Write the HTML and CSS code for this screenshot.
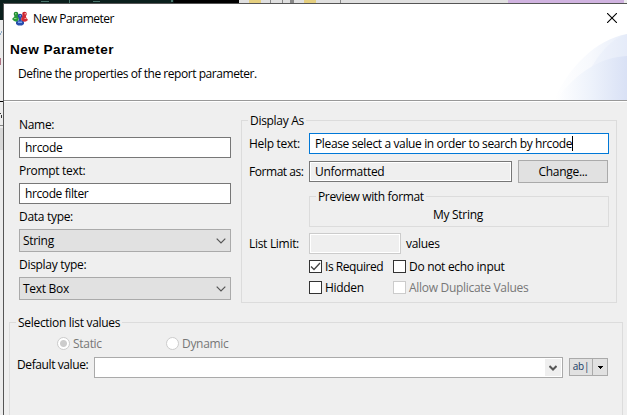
FILE: index.html
```html
<!DOCTYPE html>
<html lang="en">
<head>
<meta charset="utf-8">
<title>New Parameter</title>
<link rel="stylesheet" href="styles.css">
</head>
<body>
<svg class="backdrop" width="627" height="415" shape-rendering="crispEdges">
  <path fill="#ececec" d="M0 0h627v415H0z"/>
  <path fill="#071513" d="M0 0h239v3H0z"/><path fill="#0a1f1c" d="M0 0h172v3H0zM0 3h3v17H0z"/>
  <path fill="#48736a" d="M41 1h8v1h-8zM69 0h1v3h-1zM93 1h7v1h-7zM171 0h2v2h-2z"/>
  <path fill="#000" d="M174 0h65v3h-65zM0 101h3v1H0z"/>
  <path fill="#e0e0e0" d="M239 0h269v3H239z"/><path fill="#e5cf7f" d="M249 0h12v3h-12zM304 0h12v3h-12z"/>
  <path fill="#888" d="M270 0h1v3h-1zM282 0h1v3h-1zM290 0h4v3h-4zM340 0h1v3h-1zM0 125h3v1H0z"/>
  <path fill="#d0b3e0" d="M508 0h116v3H508z"/>
  <path fill="#d8d8d8" d="M0 128h3v22H0z"/><path fill="#8eacc8" d="M1 31h1v2H1zM0 33h1v2H0z"/>
  <path fill="#ae7182" d="M0 58h1v7H0z"/><path fill="#333" d="M0 113h1v1H0zM1 115h1v3H1z"/>
</svg>
<main class="dialog">
  <header class="header">
    <svg class="wave" width="75" height="67" viewBox="0 0 75 67">
      <defs>
        <linearGradient id="g1"><stop offset="0" stop-color="#fff"/><stop offset=".5" stop-color="#f7f9fd"/><stop offset="1" stop-color="#e7edf9"/></linearGradient>
        <linearGradient id="g2"><stop offset="0" stop-color="#fff"/><stop offset=".5" stop-color="#edf2fb"/><stop offset="1" stop-color="#d9e1f5"/></linearGradient>
      </defs>
      <path fill="url(#g1)" d="M2 67C17 34 43 7 75 1V67z"/>
      <path fill="#e2e9f8" opacity=".3" d="M37 39C47 20 59 6 75 1V24C60 25 47 31 37 39z"/>
      <path fill="url(#g2)" d="M4 67C22 42 47 24 75 23V67z"/>
    </svg>
    <div class="titlebar">
      <svg class="app-icon" width="16" height="15" viewBox="0 0 16 15">
        <circle cx="4" cy="3" r="2.300" fill="#1f8a32"/><path fill="#2b9a3c" d="M3 4h3l1 4-2 3-3-1-2-2 2-2z"/><path fill="#8cd884" d="M3 2h1.500v1.500H3zM2 7h2.500v1H2z"/>
        <circle cx="12.500" cy="3" r="2.300" fill="#c71f2c"/><path fill="#d02c37" d="M10.500 4h3.500l0 2 2 3-2 1.500-4 .5L9 8z"/><path fill="#f5a09c" d="M12.500 2H14v1.500h-1.500zM12.500 7h2v1h-2z"/>
        <circle cx="8" cy="5" r="2.300" fill="#2346a5"/><path fill="#294fae" d="M7 6h2v3l3 2v2l-2 1.500H6L4 13v-2l3-2z"/><path fill="#7aa7eb" d="M7.500 4H9v1.500H7.500zM6 10.500h4v1.500H6z"/>
      </svg>
      <span class="title">New Parameter</span>
      <svg class="close" width="10" height="10" viewBox="0 0 10 10"><path d="M0 0l10 10M10 0L0 10" stroke="#000" stroke-width="1.1"/></svg>
    </div>
    <h1>New Parameter</h1>
    <p>Define the properties of the report parameter.</p>
  </header>
  <div class="columns">
    <section class="left">
      <div class="label">Name:</div><div class="input">hrcode</div>
      <div class="label">Prompt text:</div><div class="input prompt">hrcode filter</div>
      <div class="label">Data type:</div>
      <div class="select"><span>String</span><svg width="10" height="6"><path d="M.7 .7L5 5 9.3 .7" fill="none" stroke="#555" stroke-width="1.2"/></svg></div>
      <div class="label">Display type:</div>
      <div class="select"><span>Text Box</span><svg width="10" height="6"><path d="M.7 .7L5 5 9.3 .7" fill="none" stroke="#555" stroke-width="1.2"/></svg></div>
    </section>
    <section class="group display">
      <div class="legend">Display As</div>
      <div class="row help"><span class="name">Help text:</span><div class="input focused"><span class="help-value">Please select a value in order to search by hrcode</span><i class="caret"></i></div></div>
      <div class="row format"><span class="name tight">Format as:</span><div class="input readonly">Unformatted</div><div class="button">Change...</div></div>
      <div class="group preview"><div class="legend">Preview with format</div><div class="sample">My String</div></div>
      <div class="row limit"><span class="name">List Limit:</span><div class="input disabled"></div><span class="values">values</span></div>
      <div class="checks">
        <div class="check tight"><i class="box"><svg width="11" height="11"><path d="M1 5.5L4 8.5 10 2" fill="none" stroke="#444" stroke-width="1.3"/></svg></i><span>Is Required</span></div>
        <div class="check"><i class="box"></i><span>Do not echo input</span></div>
        <div class="check"><i class="box"></i><span>Hidden</span></div>
        <div class="check off"><i class="box"></i><span>Allow Duplicate Values</span></div>
      </div>
    </section>
  </div>
  <section class="group selection">
    <div class="legend">Selection list values</div>
    <div class="radios"><div class="radio"><i class="dot on"></i>Static</div><div class="radio"><i class="dot"></i>Dynamic</div></div>
    <div class="default">
      <span class="default-name">Default value:</span>
      <div class="combo"><span class="drop"><svg width="8" height="6"><path d="M.5 1L4 4.5 7.5 1" fill="none" stroke="#555" stroke-width="2"/></svg></span></div>
      <div class="split"><span class="ab">ab|</span><span class="more"><svg width="5" height="3" shape-rendering="crispEdges"><path d="M0 0h5v1H4v1H3v1H2V2H1V1H0z"/></svg></span></div>
    </div>
  </section>
</main>
</body>
</html>
```
FILE: styles.css
```css
* { box-sizing: border-box; }
body { margin: 0; width: 627px; height: 415px; overflow: hidden; font: 12px/16px "Open Sans", "Noto Sans", sans-serif; letter-spacing: -0.3px; color: #000; white-space: nowrap; }
svg { display: block; flex: none; }
.backdrop { position: absolute; z-index: -1; left: 0; top: 0; }
.dialog { margin: 3px 0 0 3px; height: 412px; border: solid #555; border-width: 1px 0 0 1px; background: #efefef; overflow: hidden; }
.header { position: relative; height: 97px; background: #fff; border-bottom: 1px solid #999; }
.wave { position: absolute; right: 0; bottom: 0; }
.titlebar { display: flex; align-items: center; height: 30px; padding: 0 10px 0 8px; }
.app-icon { margin-top: -2px; }
.title { margin-left: 5px; letter-spacing: -0.5px; }
.close { margin: -2px 0 0 auto; }
h1 { margin: 8px 0 0 6px; font: bold 13.6px/16px "Liberation Sans", sans-serif; letter-spacing: 0.45px; }
p { margin: 8px 0 0 14px; letter-spacing: -0.45px; }
.columns { display: flex; gap: 10px; height: 222px; border-top: 1px solid #fff; padding-left: 15px; }
.left { width: 212px; padding-top: 15px; }
.label { height: 16px; margin-bottom: 4px; }
.input { height: 21px; margin-bottom: 5px; border: 1px solid #777; background: #fff; padding: 2px 5px; }
.prompt { letter-spacing: -0.4px; }
.select { display: flex; align-items: center; justify-content: space-between; height: 23px; margin-bottom: 5px; padding: 0 4px 0 3px; border: 1px solid #aaa; background: #e1e1e1; }
.group { border: 1px solid #dcdcdc; }
.legend { width: max-content; height: 16px; margin: -8px 0 0 6px; padding: 0 2px; background: #efefef; }
.display { width: 376px; height: 183px; margin-top: 18px; }
.row { display: flex; align-items: center; padding-left: 7px; }
.row .input { margin: 0; }
.name { width: 60px; }
.tight { letter-spacing: -0.45px; }
.help { margin-top: 4px; }
.focused { display: flex; width: 300px; border-color: #0078d7; }
.help-value { letter-spacing: -0.37px; }
.caret { width: 1px; height: 15px; background: #000; }
.format { margin-top: 6px; }
.readonly { width: 203px; background: #efefef; box-shadow: inset 0 0 0 1px #fff; }
.button { width: 90px; height: 23px; margin-left: 6px; border: 1px solid #aaa; background: #e1e1e1; text-align: center; line-height: 21px; }
.preview { width: 300px; height: 31px; margin: 13px 0 0 67px; }
.preview > .legend { letter-spacing: -0.35px; }
.sample { margin-top: 2px; padding-right: 2px; text-align: center; }
.limit { margin-top: 6px; }
.disabled { width: 92px; border-color: #ccc; background: #efefef; box-shadow: inset 0 0 0 1px #fff; }
.values { margin-left: 5px; }
.checks { display: grid; grid-template-columns: 84px 180px; grid-auto-rows: 13px; row-gap: 8px; margin: 6px 0 0 67px; }
.check { display: flex; align-items: center; gap: 3px; }
.box { width: 13px; height: 13px; border: 1px solid #333; background: #fff; }
.off { color: #777; }
.off .box { border-color: #ccc; }
.selection { width: 614px; height: 110px; margin: -1px 0 0 5px; }
.selection > .legend { letter-spacing: -0.3px; }
.radios { display: flex; height: 13px; margin: 6px 0 0 47px; color: #777; }
.radio { display: flex; align-items: center; gap: 3px; width: 109px; }
.dot { width: 13px; height: 13px; border: 1px solid #ccc; border-radius: 50%; background: #fff; }
.on { background: radial-gradient(circle, #ccc 3px, #fff 4px); }
.default { display: flex; margin: 7px 0 0 7px; }
.default-name { width: 77px; letter-spacing: -0.4px; }
.combo { display: flex; justify-content: flex-end; width: 469px; height: 21px; padding: 1px; border: 1px solid #aaa; background: #fff; }
.drop { display: grid; place-items: center; width: 16px; background: #efefef; }
.split { display: flex; width: 39px; height: 18px; margin: 1px 0 0 6px; border: 1px solid #aaa; background: #e1e1e1; }
.ab { width: 23px; border-right: 1px solid #aaa; text-align: center; color: #173b65; font-size: 10px; line-height: 15px; letter-spacing: -0.3px; }
.more { flex: 1; display: grid; place-items: center; }
```
